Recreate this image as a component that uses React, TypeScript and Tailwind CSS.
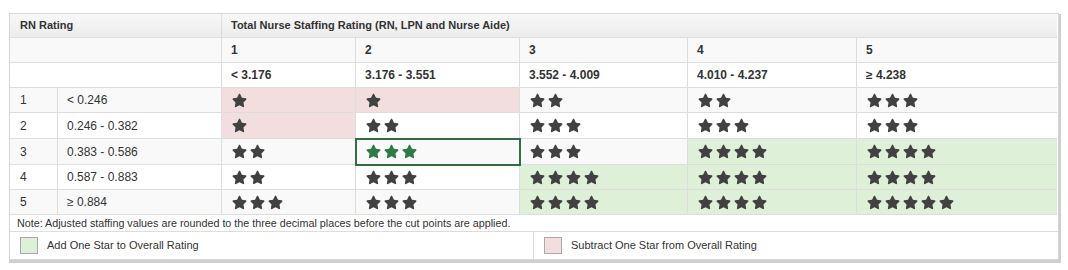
import React from "react";
import { FaStar } from "react-icons/fa";

type Bg = "g" | "p" | "";

const Stars = ({ n, color = "#414141" }: { n: number; color?: string }) => (
  <div className="flex items-center gap-[3px]">
    {Array.from({ length: n }).map((_, i) => (
      <FaStar key={i} size={15} color={color} className="shrink-0" />
    ))}
  </div>
);

const rows: { num: string; range: string; cells: { n: number; bg: Bg; hl?: boolean }[] }[] = [
  {
    num: "1",
    range: "< 0.246",
    cells: [
      { n: 1, bg: "p" },
      { n: 1, bg: "p" },
      { n: 2, bg: "" },
      { n: 2, bg: "" },
      { n: 3, bg: "" },
    ],
  },
  {
    num: "2",
    range: "0.246 - 0.382",
    cells: [
      { n: 1, bg: "p" },
      { n: 2, bg: "" },
      { n: 3, bg: "" },
      { n: 3, bg: "" },
      { n: 3, bg: "" },
    ],
  },
  {
    num: "3",
    range: "0.383 - 0.586",
    cells: [
      { n: 2, bg: "" },
      { n: 3, bg: "", hl: true },
      { n: 3, bg: "" },
      { n: 4, bg: "g" },
      { n: 4, bg: "g" },
    ],
  },
  {
    num: "4",
    range: "0.587 - 0.883",
    cells: [
      { n: 2, bg: "" },
      { n: 3, bg: "" },
      { n: 4, bg: "g" },
      { n: 4, bg: "g" },
      { n: 4, bg: "g" },
    ],
  },
  {
    num: "5",
    range: "≥ 0.884",
    cells: [
      { n: 3, bg: "" },
      { n: 3, bg: "" },
      { n: 4, bg: "g" },
      { n: 4, bg: "g" },
      { n: 5, bg: "g" },
    ],
  },
];

const heights = ["h-[25px]", "h-[26px]", "h-[26px]", "h-[25px]", "h-[25px]"];

export default function App() {
  return (
    <div
      className="bg-white w-[1068px] h-[270px] pt-[13px] pl-[9px] text-[#333] text-[12px]"
      style={{ fontFamily: '"Liberation Sans", Arial, sans-serif' }}
    >
      <div className="w-[1050px] border border-[#d6d6d6] shadow-[1px_2px_0_1px_#cfcfcf]">
        <div className="grid grid-cols-[48px_164px_134px_164px_168px_169px_200px]">
          {/* header row 1 */}
          <div className="col-span-2 h-[24px] flex items-center pl-[10px] font-bold text-[11px] border-r border-b border-[#ddd] bg-gradient-to-b from-[#f8f8f8] to-[#ececec]">
            RN Rating
          </div>
          <div className="col-span-5 h-[24px] flex items-center pl-[9px] font-bold text-[11px] border-b border-[#ddd] bg-gradient-to-b from-[#f8f8f8] to-[#ececec]">
            Total Nurse Staffing Rating (RN, LPN and Nurse Aide)
          </div>

          {/* header row 2 */}
          <div className="col-span-2 h-[25px] border-r border-b border-[#ddd] bg-[#f9f9f9]" />
          {["1", "2", "3", "4", "5"].map((t, i) => (
            <div
              key={t}
              className={`h-[25px] flex items-center pl-[9px] font-bold bg-[#f9f9f9] border-b border-[#ddd] ${i < 4 ? "border-r" : ""}`}
            >
              {t}
            </div>
          ))}

          {/* header row 3 */}
          <div className="col-span-2 h-[25px] border-r border-b border-[#ddd] bg-white" />
          {["< 3.176", "3.176 - 3.551", "3.552 - 4.009", "4.010 - 4.237", "≥ 4.238"].map((t, i) => (
            <div
              key={t}
              className={`h-[25px] flex items-center pl-[9px] font-bold bg-white border-b border-[#ddd] ${i < 4 ? "border-r" : ""}`}
            >
              {t}
            </div>
          ))}

          {/* data rows */}
          {rows.map((r, ri) => {
            const stripe = ri % 2 === 0 ? "bg-[#f9f9f9]" : "bg-white";
            const h = heights[ri];
            return (
              <React.Fragment key={r.num}>
                <div className={`${h} ${stripe} flex items-center pl-[10px] border-r border-b border-[#ddd]`}>
                  {r.num}
                </div>
                <div className={`${h} ${stripe} flex items-center pl-[9px] border-r border-b border-[#ddd]`}>
                  {r.range}
                </div>
                {r.cells.map((c, ci) => {
                  const bg = c.bg === "g" ? "bg-[#dff0d8]" : c.bg === "p" ? "bg-[#f2dede]" : stripe;
                  return (
                    <div
                      key={ci}
                      className={`${h} ${bg} flex items-center pl-[10px] border-b border-[#ddd] ${ci < 4 ? "border-r" : ""} ${
                        c.hl ? "relative z-10 outline-2 outline-solid outline-[#2f6f41] -outline-offset-1" : ""
                      }`}
                    >
                      <Stars n={c.n} color={c.hl ? "#2f7a45" : "#414141"} />
                    </div>
                  );
                })}
              </React.Fragment>
            );
          })}
        </div>

        {/* note */}
        <div className="h-[17px] flex items-center pl-[7px] text-[10.75px] border-b border-[#ddd] bg-white">
          Note: Adjusted staffing values are rounded to the three decimal places before the cut points are applied.
        </div>

        {/* legend */}
        <div className="grid grid-cols-2 h-[27px] bg-white">
          <div className="flex items-center pl-[10px] gap-[9px] border-r border-[#ddd] text-[11px]">
            <div className="w-[18px] h-[17px] bg-[#dff0d8] border border-[#a9a9a9]" />
            <span>Add One Star to Overall Rating</span>
          </div>
          <div className="flex items-center pl-[10px] gap-[9px] text-[11px]">
            <div className="w-[18px] h-[17px] bg-[#f2dede] border border-[#a9a9a9]" />
            <span>Subtract One Star from Overall Rating</span>
          </div>
        </div>
      </div>
    </div>
  );
}
